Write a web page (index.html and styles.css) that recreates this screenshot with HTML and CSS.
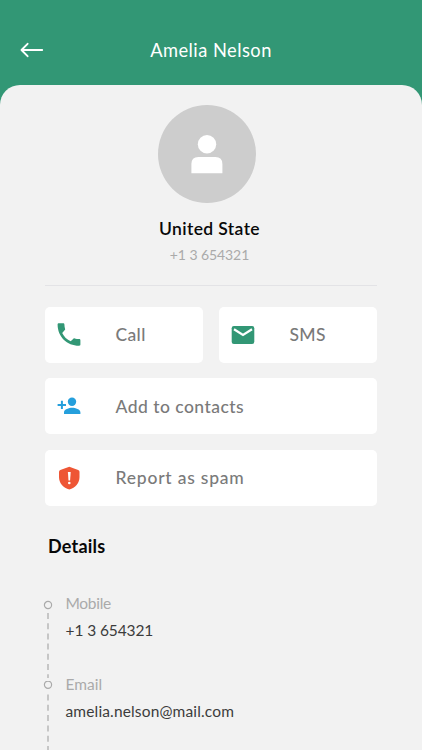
FILE: index.html
```html
<!DOCTYPE html>
<html lang="en">
<head>
<meta charset="utf-8">
<meta name="viewport" content="width=device-width, initial-scale=1">
<title>Amelia Nelson</title>
<link rel="stylesheet" href="styles.css">
</head>
<body>
<header class="header">
  <svg class="back" viewBox="0 0 24 16" fill="none" stroke="#fff" stroke-width="1.9" stroke-linecap="round" stroke-linejoin="round"><path d="M22.2 8H1.8M7.600 1.800 1.500 8l6.100 6.200"/></svg>
  <h1 class="title">Amelia Nelson</h1>
</header>
<main class="sheet">
  <section class="profile">
    <div class="avatar">
      <svg viewBox="0 0 32 39" fill="#fff"><circle cx="16" cy="9.2" r="9.2"/><path d="M.4 38.2V29q0-7 7-7h17q7 0 7 7v9.2z"/></svg>
    </div>
    <h2 class="country">United State</h2>
    <p class="phone">+1 3 654321</p>
  </section>
  <section class="actions">
    <button class="action">
      <svg class="icon" viewBox="0 0 24 24" fill="#329775"><path d="M5.2 9.900c1.700 3.600 4.800 6.600 8.500 8.400l2.700-2.600c.4-.4.8-.5 1.300-.3 1.400.5 2.900.7 4.400.7.800 0 1.300.500 1.300 1.200v4.300c0 .8-.5 1.200-1.300 1.200C9.900 22.800.600 13.500.600 1.500.600.700 1.100.2 1.900.2h4.200c.8 0 1.300.5 1.300 1.300 0 1.500.3 3 .7 4.400.1.400 0 .9-.3 1.200z"/></svg>
      <span class="call">Call</span>
    </button>
    <button class="action">
      <svg class="icon" viewBox="0 0 24 24"><rect x=".7" y="3" width="22.600" height="18" rx="2.200" fill="#329775"/><path d="m3 6.200 9 5.700 9-5.700" fill="none" stroke="#fff" stroke-width="2.200"/></svg>
      <span class="sms">SMS</span>
    </button>
    <button class="action wide">
      <svg class="icon" viewBox="0 0 24 24" fill="#259fdc"><circle cx="15" cy="7.700" r="4.200"/><path d="M7 20v-1.800c0-2.900 5-4.500 8.200-4.500s8.200 1.600 8.200 4.500V20zM3.900 6.700h2v3.200H9v2H5.900v3.200h-2v-3.200H.6v-2h3.300z"/></svg>
      <span class="add">Add to contacts</span>
    </button>
    <button class="action wide">
      <svg class="icon" viewBox="0 0 24 24"><path d="M12.300.8 21.200 4q1.300.5 1.300 1.800v5.100c0 6-4.200 10.800-10.200 12.600C6.200 21.700 2 16.900 2 10.900V5.800Q2 4.500 3.300 4z" fill="#ee5635"/><path d="M10.900 6h2.800l-.6 8.500h-1.600z" fill="#fff"/><circle cx="12.300" cy="17" r="1.300" fill="#fff"/></svg>
      <span class="spam">Report as spam</span>
    </button>
  </section>
  <section class="details">
    <h3 class="heading">Details</h3>
    <ol class="timeline">
      <li class="entry">
        <svg class="rail" viewBox="0 0 10 81" fill="none" stroke="#aaa"><circle cx="5" cy="5" r="3.600" stroke-width="1.200"/><path d="M5 13v65" stroke="#b8b8b8" stroke-width="1.500" stroke-dasharray="6 4.200"/></svg>
        <div class="label mobile">Mobile</div>
        <div class="value number">+1 3 654321</div>
      </li>
      <li class="entry">
        <svg class="rail" viewBox="0 0 10 81" fill="none" stroke="#aaa"><circle cx="5" cy="3.700" r="3.600" stroke-width="1.200"/><path d="M5 13.500v67" stroke="#b8b8b8" stroke-width="1.500" stroke-dasharray="6 4.300"/></svg>
        <div class="label">Email</div>
        <div class="value address">amelia.nelson@mail.com</div>
      </li>
    </ol>
  </section>
</main>
</body>
</html>
```
FILE: styles.css
```css
* { box-sizing: border-box; margin: 0; padding: 0; }
html, body { height: 750px; overflow: hidden; }
body { background: #329775; font-family: Lato, "Open Sans", sans-serif; }

.header { height: 85px; padding: 36px 20px 0; display: grid; grid-template-columns: 24px 1fr 24px; align-items: start; }
.back { width: 24px; height: 16px; margin-top: 5.500px; }
.title { font-size: 18.300px; line-height: 28px; font-weight: 400; letter-spacing: .47px; color: #fff; text-align: center; }

.sheet { height: 665px; background: #f2f2f2; border-radius: 20px 20px 0 0; padding: 20px 45px 0; overflow: hidden; }
.profile { height: 181px; border-bottom: 1px solid #e3e3e6; display: flex; flex-direction: column; align-items: center; }
.avatar { width: 98px; height: 98px; margin-right: 8px; border-radius: 50%; background: #cdcdcd; display: grid; place-items: center; }
.avatar svg { width: 32px; height: 39px; }
.country { margin: 14px 3px 0 0; font-size: 17.500px; line-height: 24px; font-weight: 600; letter-spacing: .38px; color: #080808; }
.phone { margin: 4px 3px 0 0; font-size: 14px; line-height: 20px; letter-spacing: -.08px; color: #aaa; }

.actions { display: grid; grid-template-columns: 158px 158px; gap: 15.400px 16px; margin-top: 20.900px; }
.action { height: 56px; border: 0; border-radius: 5px; background: #fff; display: flex; align-items: center; padding: 0 12px; gap: 34.500px; font: 500 17.500px/24px Lato, "Open Sans", sans-serif; color: #7a7a7a; white-space: nowrap; }
.wide { grid-column: 1 / -1; }
.icon { width: 24px; height: 24px; flex: none; }
.call, .sms { letter-spacing: .35px; }
.add { letter-spacing: .46px; }
.spam { letter-spacing: .78px; }
.add, .spam { padding-top: 1px; }

.details { margin-top: 27.300px; padding-left: 3px; }
.heading { font-size: 18px; line-height: 26px; font-weight: 700; letter-spacing: .2px; color: #080808; }
.timeline { list-style: none; margin: 34px 0 0 -5px; }
.entry { height: 81px; display: grid; grid-template-columns: 10px 1fr; grid-template-rows: 20px 20px; row-gap: 7px; column-gap: 12.500px; font-size: 15.500px; line-height: 20px; }
.rail { width: 10px; height: 81px; grid-row: 1 / 3; margin-top: 7px; }
.label { color: #aaa; }
.value { color: #3c3c3c; }
.mobile { letter-spacing: -.3px; }
.number { letter-spacing: -.1px; }
.address { letter-spacing: .15px; }
```
